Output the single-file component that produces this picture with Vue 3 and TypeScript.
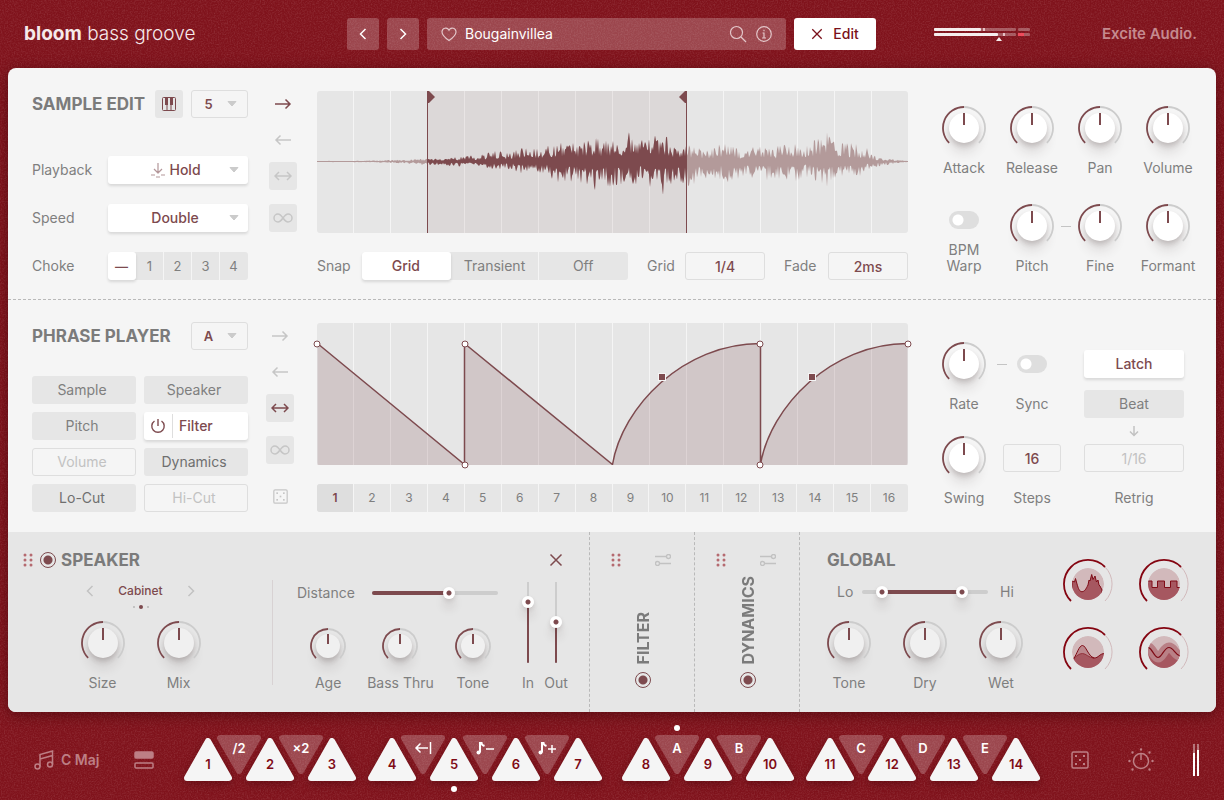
<script setup lang="ts">
import { computed, h, ref, type FunctionalComponent } from 'vue'

interface KnobProps { label: string; small?: boolean }

const Knob: FunctionalComponent<KnobProps> = (props) => {
  const size = props.small ? 36 : 44
  const c = size / 2
  const r = c - 1
  const cap = props.small ? 12 : 15
  const k = r * Math.SQRT1_2
  return h('label', { class: ['knob', props.small ? 'knob-small' : ''] }, [
    h('span', { class: 'knob-dial' }, [
      h('span', { class: 'knob-cap' }),
      h('svg', { width: size, height: size, viewBox: `0 0 ${size} ${size}` }, [
        h('path', { class: 'knob-rest', d: `M${c} ${c - r}A${r} ${r} 0 0 1 ${c + k} ${c + k}` }),
        h('path', { class: 'knob-arc', d: `M${c - k} ${c + k}A${r} ${r} 0 0 1 ${c} ${c - r}` }),
        h('path', { class: 'knob-mark', d: `M${c} ${c - cap}v${props.small ? 10 : 12}` }),
      ]),
      h('input', { type: 'range', min: 0, max: 100, value: 50 }),
    ]),
    h('span', { class: 'knob-label' }, props.label),
  ])
}
Knob.props = { label: String, small: Boolean }

const icons: Record<string, { w: number; h: number; d: string }> = {
  right: { w: 18, h: 12, d: 'M1 6h15M11.500 1.500 16 6l-4.500 4.500' },
  left: { w: 18, h: 12, d: 'M17 6H2M6.500 1.500 2 6l4.500 4.500' },
  both: { w: 18, h: 12, d: 'M1 6h16M5 2 1 6l4 4M13 2l4 4-4 4' },
  loop: { w: 20, h: 12, d: 'M10 6C8 3.200 7 2 5 2a4 4 0 0 0 0 8c2 0 3-1.200 5-4s3-4 5-4a4 4 0 0 1 0 8c-2 0-3-1.200-5-4' },
  prev: { w: 8, h: 12, d: 'M6.500 1 1.500 6l5 5' },
  next: { w: 8, h: 12, d: 'M1.500 1l5 5-5 5' },
  down: { w: 10, h: 12, d: 'M5 1v9.500M1 6.500l4 4 4-4' },
  close: { w: 14, h: 14, d: 'M1.500 1.500l11 11M12.500 1.500l-11 11' },
}
const Icon: FunctionalComponent<{ name: string }> = (props) => {
  const i = icons[props.name]
  return h('svg', { class: 'icon', width: i.w, height: i.h, viewBox: `0 0 ${i.w} ${i.h}`, 'aria-hidden': 'true' }, [h('path', { d: i.d })])
}
Icon.props = { name: String }

const Dice: FunctionalComponent<{ size: number }> = (props) =>
  h('svg', { class: 'icon', width: props.size, height: props.size, viewBox: '0 0 18 18', 'aria-hidden': 'true' }, [
    h('rect', { x: 1, y: 1, width: 16, height: 16, rx: 1.5 }),
    ...[[5, 5], [13, 5], [9, 9], [5, 13], [13, 13]].map(([x, y]) => h('rect', { class: 'pip', x: x - 1, y: y - 1, width: 2, height: 2 })),
  ])
Dice.props = { size: Number }

const preset = ref('Bougainvillea')
const choke = ref('—')
const snap = ref('Grid')
const step = ref(1)

const modules = [
  { name: 'Sample', state: '' }, { name: 'Speaker', state: '' },
  { name: 'Pitch', state: '' }, { name: 'Filter', state: 'active' },
  { name: 'Volume', state: 'off' }, { name: 'Dynamics', state: 'used' },
  { name: 'Lo-Cut', state: 'used' }, { name: 'Hi-Cut', state: 'off' },
]

const W = 591
const upper = [[0, 0.6], [40, 0.8], [80, 1.8], [110, 3], [145, 5], [165, 9], [200, 13], [225, 17], [245, 24], [265, 22], [290, 26], [310, 29], [330, 28], [352, 28], [362, 17], [390, 16], [410, 18], [440, 14], [465, 19], [490, 23], [512, 29], [525, 24], [540, 17], [550, 16], [557, 8], [567, 4], [580, 2], [591, 0.8]]
const lower = [[0, 0.6], [40, 0.8], [80, 1.8], [110, 4], [145, 5], [165, 6], [200, 11], [225, 15], [245, 21], [265, 27], [290, 30], [310, 27], [330, 26], [348, 34], [357, 24], [370, 24], [385, 20], [430, 21], [470, 20], [490, 19], [512, 25], [530, 17], [548, 14], [557, 7], [567, 4], [580, 2], [591, 0.8]]

function envelope(table: number[][], x: number): number {
  for (let i = 1; i < table.length; i++) {
    const [x1, y1] = table[i]
    const [x0, y0] = table[i - 1]
    if (x <= x1) return y0 + ((y1 - y0) * (x - x0)) / (x1 - x0)
  }
  return 0.6
}

const wave = computed(() => {
  let seed = 20731
  const rnd = () => {
    seed = (seed * 1103515245 + 12345) % 2147483648
    return seed / 2147483648
  }
  const top: string[] = []
  const bottom: string[] = []
  for (let x = 0; x <= W; x += 1) {
    const swell = 0.95 + 0.1 * Math.sin(x / 5.3)
    const a = envelope(upper, x) * swell * (0.2 + 0.8 * Math.pow(rnd(), 1.3))
    const b = envelope(lower, x) * swell * (0.2 + 0.8 * Math.pow(rnd(), 1.3))
    top.push(`${x} ${(70.5 - Math.max(a, 0.5)).toFixed(1)}`)
    bottom.push(`${x} ${(70.5 + Math.max(b, 0.5)).toFixed(1)}`)
  }
  return `M${top.join('L')}L${bottom.reverse().join('L')}Z`
})

const selection = { start: 110, end: 370 }
const selectionStyle = {
  left: `${(selection.start / W) * 100}%`,
  width: `${((selection.end - selection.start) / W) * 100}%`,
}

const curve = 'M.5 20.500L147.500 141.500V20.500L295.500 141.500C305 84 366 20.500 443.500 20.500V141.500C453 84 514 20.500 590.500 20.500'
const handles = [[0.5, 20.5], [147.5, 20.5], [147.5, 141.5], [443.5, 20.5], [443.5, 141.5], [590.5, 20.5]]
const benders = [[345, 53.5], [495, 53.5]]
const place = ([x, y]: number[]) => ({ left: `${(x / W) * 100}%`, top: `${(y / 142) * 100}%` })

interface Pad { up: boolean; text: string; mark?: boolean; glyph?: string }
const up = (text: string, mark = false): Pad => ({ up: true, text, mark })
const dn = (text: string, mark = false, glyph = ''): Pad => ({ up: false, text, mark, glyph })
const pads: Pad[][] = [
  [up('1'), dn('/2'), up('2'), dn('×2'), up('3')],
  [up('4'), dn('', false, 'back'), up('5', true), dn('', false, 'minus'), up('6'), dn('', false, 'plus'), up('7')],
  [up('8'), dn('A', true), up('9'), dn('B'), up('10')],
  [up('11'), dn('C'), up('12'), dn('D'), up('13'), dn('E'), up('14')],
]

const macros = [
  { name: 'Macro 1', area: 'M-16-3L-13.500-2-12.500-5.500-11 0C-9.500 5-8.500 7.700-6 7.700S-2 5 0 1L1-4 2-3 3.700-9.500 5-4.500 7-8 8.500-2 10-4 11 1 12 2 14 6V17H-16Z' },
  { name: 'Macro 2', area: 'M-17-3H-12V3.500H-6.500V-3H.500V3.500H6.500V-3H13V3.500H17V18H-17Z' },
  { name: 'Macro 3', area: 'M-14 6C-11 4-9 1.500-5.500 1.500S1 6 6 6 11 1.500 17 1.500V18H-17Z', line: 'M-14 6C-11 2-9-6.500-5.500-6.500S0 4 6 6' },
  { name: 'Macro 4', area: 'M-17-5C-12-5-10 5.500-6 5.500S0-4.500 5-4.500 11 4 17 4V18H-17Z', band: 'M-17-5C-12-5-10 5.500-6 5.500S0-4.500 5-4.500 11 4 17 4' },
]
</script>

<template>
  <div class="plugin">
    <svg class="grain" width="100%" height="100%" aria-hidden="true">
      <filter id="grain"><feTurbulence type="fractalNoise" baseFrequency="0.7" numOctaves="2" seed="4" /><feColorMatrix values="0 0 0 0 1  0 0 0 0 .85  0 0 0 0 .85  1.400 0 0 0 -.55" /></filter>
      <rect width="100%" height="100%" filter="url(#grain)" />
    </svg>

    <header class="top">
      <h1><b>bloom</b> bass groove</h1>
      <div class="browser">
        <button class="glass" aria-label="Previous preset"><Icon name="prev" /></button>
        <button class="glass" aria-label="Next preset"><Icon name="next" /></button>
        <label class="search">
          <svg width="16" height="15" viewBox="0 0 16 15"><path d="M8 13.500C4 10.600 1 8 1 4.900A3.700 3.700 0 0 1 8 3.200 3.700 3.700 0 0 1 15 4.900C15 8 12 10.600 8 13.500Z" /></svg>
          <input v-model="preset" type="text" aria-label="Preset">
          <svg width="18" height="18" viewBox="0 0 18 18"><circle cx="7.500" cy="7.500" r="6" /><path d="M12 12l5 5" /></svg>
          <svg width="18" height="18" viewBox="0 0 18 18"><circle cx="9" cy="9" r="7.300" /><path d="M7.500 8H9v5M7 13h4M9 4.800v1.400" /></svg>
        </label>
        <button class="edit"><Icon name="close" />Edit</button>
      </div>
      <div class="brand">
        <svg width="96" height="16" viewBox="0 0 96 16" role="img" aria-label="Output level">
          <g fill="#fff" fill-opacity=".3"><rect width="82" height="3" y="2" rx="1" /><rect x="84" y="2" width="12" height="3" rx="1" /><rect width="82" height="3" y="7" rx="1" /><rect x="84" y="7" width="12" height="3" rx="1" /></g>
          <g fill="#f5eded"><rect y="2" width="47" height="3" rx="1" /><rect y="7" width="64" height="3" rx="1" /><path d="M65 11l3 4h-6z" /></g>
          <path d="M49 2h2v3h-2zM69 7h2v3h-2z" fill="#e5c2c5" /><path d="M84 7h6v3h-6z" fill="#ee4b5c" />
        </svg>
        <span>Excite Audio.</span>
      </div>
    </header>

    <main>
      <section class="row sample">
        <div class="left">
          <div class="heading">
            <h2>SAMPLE EDIT</h2>
            <button class="square keys" aria-label="Keyboard">
              <svg width="14" height="14" viewBox="0 0 14 14"><rect x=".5" y=".5" width="13" height="13" rx="1" fill="none" stroke="currentColor" /><path d="M5 8v5.500M9 8v5.500" stroke="currentColor" /><path d="M3 0h3v8H3zM8 0h3v8H8z" fill="currentColor" /></svg>
            </button>
            <span class="pick slim"><select aria-label="Sample slot"><option>5</option></select><svg width="10" height="6" viewBox="0 0 10 6"><path d="M1 .5h8L5 5z" /></svg></span>
          </div>
          <div class="fields">
            <div class="field">
              <label for="playback">Playback</label>
              <span class="pick wide hold">
                <svg class="hold-icon" width="14" height="15" viewBox="0 0 14 15"><path d="M7 0v10M3 6l4 4 4-4M0 12h4M10 12h4M5 14h4" /></svg>
                <select id="playback"><option>Hold</option></select><svg width="10" height="6" viewBox="0 0 10 6"><path d="M1 .5h8L5 5z" /></svg>
              </span>
            </div>
            <div class="field">
              <label for="speed">Speed</label>
              <span class="pick wide"><select id="speed"><option>Double</option></select><svg width="10" height="6" viewBox="0 0 10 6"><path d="M1 .5h8L5 5z" /></svg></span>
            </div>
            <div class="field">
              <span>Choke</span>
              <div class="segments" role="group" aria-label="Choke">
                <button v-for="c in ['—', '1', '2', '3', '4']" :key="c" :class="{ on: choke === c }" :aria-pressed="choke === c" @click="choke = c">{{ c }}</button>
              </div>
            </div>
          </div>
        </div>

        <div class="direction">
          <button class="square bare on" aria-label="Forward"><Icon name="right" /></button>
          <button class="square bare" aria-label="Backward"><Icon name="left" /></button>
          <button class="square" aria-label="Ping-pong"><Icon name="both" /></button>
          <button class="square last" aria-label="Loop"><Icon name="loop" /></button>
        </div>

        <div class="center">
          <div class="graph">
            <div class="cells"><i v-for="n in 16" :key="n" /></div>
            <div class="selection" :style="selectionStyle" />
            <svg class="plot" viewBox="0 0 591 142" preserveAspectRatio="none" role="img" aria-label="Waveform">
              <clipPath id="picked"><rect x="110" y="0" width="260" height="142" /></clipPath>
              <path :d="wave" fill="#b39a9a" />
              <path :d="wave" fill="#7d4a4e" clip-path="url(#picked)" />
            </svg>
            <div class="selection edges" :style="selectionStyle">
              <svg width="7" height="12" viewBox="0 0 7 12"><path d="M0 0h1l6 6-6 6H0z" /></svg>
              <svg width="7" height="12" viewBox="0 0 7 12"><path d="M7 0H6L0 6l6 6h1z" /></svg>
            </div>
          </div>
          <div class="snapbar">
            <span class="w-snap">Snap</span>
            <div class="segments grow" role="group" aria-label="Snap">
              <button v-for="s in ['Grid', 'Transient', 'Off']" :key="s" :class="{ on: snap === s }" :aria-pressed="snap === s" @click="snap = s">{{ s }}</button>
            </div>
            <label class="w-grid" for="grid">Grid</label><input id="grid" class="box" type="text" value="1/4">
            <label class="w-fade" for="fade">Fade</label><input id="fade" class="box" type="text" value="2ms">
          </div>
        </div>

        <div class="right knobs">
          <Knob label="Attack" /><Knob label="Release" /><Knob label="Pan" /><Knob label="Volume" />
          <label class="switch warp"><input type="checkbox"><span>BPM<br>Warp</span></label>
          <Knob label="Pitch" class="linked" /><Knob label="Fine" /><Knob label="Formant" />
        </div>
      </section>

      <section class="row phrase">
        <div class="left">
          <div class="heading">
            <h2>PHRASE PLAYER</h2>
            <span class="pick slim"><select aria-label="Phrase"><option>A</option></select><svg width="10" height="6" viewBox="0 0 10 6"><path d="M1 .5h8L5 5z" /></svg></span>
          </div>
          <div class="modules">
            <button v-for="m in modules" :key="m.name" :class="m.state">
              <svg v-if="m.state === 'active'" width="16" height="16" viewBox="0 0 16 16"><path d="M8 1v7M4.500 3a6.200 6.200 0 1 0 7 0" /></svg>
              <span>{{ m.name }}</span>
            </button>
          </div>
        </div>

        <div class="direction">
          <button class="square bare" aria-label="Forward"><Icon name="right" /></button>
          <button class="square bare" aria-label="Backward"><Icon name="left" /></button>
          <button class="square on" aria-label="Ping-pong"><Icon name="both" /></button>
          <button class="square last" aria-label="Loop"><Icon name="loop" /></button>
          <button class="square bare random" aria-label="Randomise"><Dice :size="15" /></button>
        </div>

        <div class="center">
          <div class="graph">
            <div class="cells"><i v-for="n in 16" :key="n" /></div>
            <svg class="plot" viewBox="0 0 591 142" preserveAspectRatio="none" role="img" aria-label="Phrase curve">
              <path :d="curve + 'V142H.5Z'" fill="#7d4a4e" fill-opacity=".2" />
              <path :d="curve" fill="none" stroke="#7d4a4e" stroke-width="1.500" vector-effect="non-scaling-stroke" />
            </svg>
            <i v-for="(p, n) in handles" :key="'h' + n" class="handle" :style="place(p)" />
            <i v-for="(p, n) in benders" :key="'b' + n" class="bender" :style="place(p)" />
          </div>
          <div class="segments steps" role="group" aria-label="Step">
            <button v-for="n in 16" :key="n" :class="{ current: step === n }" @click="step = n">{{ n }}</button>
          </div>
        </div>

        <div class="right timing">
          <Knob label="Rate" class="linked" />
          <label class="switch sync"><input type="checkbox"><span>Sync</span></label>
          <div class="retrig">
            <button class="latch">Latch</button>
            <button>Beat</button>
            <span class="down"><Icon name="down" /></span>
            <input id="retrig" class="box dim" type="text" value="1/16">
            <label for="retrig">Retrig</label>
          </div>
          <Knob label="Swing" />
          <div class="stepcount"><input id="steps" class="box" type="text" value="16"><label for="steps">Steps</label></div>
        </div>
      </section>

      <section class="fx">
        <div class="speaker">
          <div class="fx-head">
            <svg class="grip" width="10" height="14" viewBox="0 0 10 14"><path d="M2 2h0M8 2h0M2 7h0M8 7h0M2 12h0M8 12h0" /></svg>
            <input type="radio" class="power" name="p1" aria-label="Speaker on" checked>
            <h2>SPEAKER</h2>
            <button class="plain" aria-label="Close"><Icon name="close" /></button>
          </div>
          <div class="fx-body">
            <div class="cabinet">
              <div class="cab-pick">
                <button class="plain" aria-label="Previous"><Icon name="prev" /></button>
                <span>Cabinet</span>
                <button class="plain" aria-label="Next"><Icon name="next" /></button>
              </div>
              <div class="dots"><i /><i /><i /></div>
              <div class="pair"><Knob label="Size" /><Knob label="Mix" /></div>
            </div>
            <div class="mic">
              <label class="distance">Distance
                <span class="slider"><i class="fill" :style="{ left: '0%', width: '61%' }" /><i class="thumb" :style="{ left: '61%' }" /><input type="range" value="61"></span>
              </label>
              <div class="trio"><Knob small label="Age" /><Knob small label="Bass Thru" /><Knob small label="Tone" /></div>
            </div>
            <label v-for="s in [{ n: 'In', v: 75 }, { n: 'Out', v: 51 }]" :key="s.n" class="level">
              <span class="vslider"><i class="fill" :style="{ height: s.v + '%' }" /><i class="thumb" :style="{ bottom: s.v + '%' }" /><input type="range" :value="s.v"></span>
              <span>{{ s.n }}</span>
            </label>
          </div>
        </div>

        <div v-for="s in ['FILTER', 'DYNAMICS']" :key="s" class="strip">
          <div class="strip-head">
            <svg class="grip" width="10" height="14" viewBox="0 0 10 14"><path d="M2 2h0M8 2h0M2 7h0M8 7h0M2 12h0M8 12h0" /></svg>
            <svg width="16" height="12" viewBox="0 0 16 12"><circle cx="13.500" cy="2.500" r="2" /><circle cx="2.500" cy="9.500" r="2" /><path d="M0 2.500h11.500M4.500 9.500H16" /></svg>
          </div>
          <h2>{{ s }}</h2>
          <input type="radio" class="power" :name="s" :aria-label="s + ' on'" checked>
        </div>

        <div class="global">
          <div class="global-main">
            <h2>GLOBAL</h2>
            <div class="lohi">
              <span>Lo</span>
              <span class="slider"><i class="fill" :style="{ left: '16%', width: '63%' }" /><i class="thumb" :style="{ left: '16%' }" /><i class="thumb" :style="{ left: '79%' }" /><input type="range" value="16" aria-label="Low and high"></span>
              <span>Hi</span>
            </div>
            <div class="trio"><Knob label="Tone" /><Knob label="Dry" /><Knob label="Wet" /></div>
          </div>
          <div class="macros">
            <label v-for="(m, n) in macros" :key="m.name">
              <svg width="50" height="50" viewBox="-25 -25 50 50">
                <clipPath :id="'disc' + n"><circle r="16" /></clipPath>
                <path d="M17 -17A24 24 0 0 1 17 17" stroke="#d2babc" fill="none" />
                <path d="M-17 17A24 24 0 1 1 17 -17" stroke="#840511" stroke-width="1.800" fill="none" />
                <g :clip-path="`url(#disc${n})`">
                  <circle r="16" fill="#d2b9bb" />
                  <path :d="m.area" fill="#a65760" stroke="#7f0b16" />
                  <path v-if="m.line" :d="m.line" fill="#a65760" fill-opacity=".5" stroke="#7f0b16" />
                  <template v-if="m.band"><path :d="m.band" fill="none" stroke="#b98086" stroke-width="10" /><path :d="m.band" fill="none" stroke="#7f0b16" stroke-width="1.200" /></template>
                </g>
              </svg>
              <input type="range" :aria-label="m.name">
            </label>
          </div>
        </div>
      </section>
    </main>

    <footer>
      <div class="foot-left">
        <button class="key">
          <svg width="21" height="20" viewBox="0 0 21 20"><circle cx="3.500" cy="16.500" r="2.500" /><circle cx="16" cy="14.500" r="2.500" /><path d="M6 16.500V4.500L18.500 1v13.500M6 9l12.500-3.500" /></svg>
          C Maj
        </button>
        <button class="key" aria-label="Layout"><svg width="20" height="18" viewBox="0 0 20 18"><rect x="1" y="1" width="18" height="6" rx="1" fill="currentColor" /><rect x="1" y="12" width="18" height="5" rx="1" /></svg></button>
      </div>
      <div class="pads">
        <div v-for="(g, n) in pads" :key="n" class="pad-group">
          <button v-for="(p, m) in g" :key="m" :class="['pad', p.up ? 'up' : 'dn', { mark: p.mark }]" :aria-label="p.glyph || p.text">
            <svg v-if="p.up" class="tri" width="48" height="43" viewBox="0 0 48 43"><path d="M24 3 45 40H3z" /></svg>
            <svg v-else class="tri" width="44" height="39" viewBox="0 0 44 39"><path d="M3 3h38L22 36z" /></svg>
            <span v-if="p.text">{{ p.text }}</span>
            <svg v-else class="glyph" width="20" height="14" viewBox="0 0 20 14">
              <path v-if="p.glyph === 'back'" d="M15 7H3M7.500 2.500 3 7l4.500 4.500M17.500 1v12" />
              <template v-else>
                <circle cx="3.500" cy="11.500" r="2" fill="#fff" stroke="none" /><path d="M5 11.500V2h1.500q0 2 3 3" stroke-width="2" />
                <path :d="p.glyph === 'plus' ? 'M11 8h8M15 4v8' : 'M11 8h8'" />
              </template>
            </svg>
          </button>
        </div>
      </div>
      <div class="foot-right">
        <button class="key" aria-label="Randomise"><Dice :size="18" /></button>
        <button class="key" aria-label="Settings"><svg width="26" height="24" viewBox="0 0 26 24"><circle cx="13" cy="13" r="7.500" /><path d="M13 6v6" /><path class="rays" d="M13 1.500h0M4.500 4.500h0M21.500 4.500h0M1.500 13h0M24.500 13h0M4.500 21.500h0M21.500 21.500h0" /></svg></button>
        <svg width="8" height="32" viewBox="0 0 8 32" role="img" aria-label="Meter"><path d="M1 0h2v32H1zM5 0h2v32H5z" fill="#fff" fill-opacity=".4" /><path d="M1 9h2v23H1zM5 6h2v26H5z" fill="#fff" /></svg>
      </div>
    </footer>
  </div>
</template>

<style>
body { margin: 0; background: #82141d; }
.icon { display: block; fill: none; stroke: currentColor; stroke-width: 1.5; }
.icon .pip { fill: currentColor; stroke: none; }
.knob { display: flex; flex-direction: column; align-items: center; gap: 9px; position: relative; }
.knob-dial { position: relative; display: block; width: 44px; height: 44px; }
.knob-small .knob-dial { width: 36px; height: 36px; }
.knob-dial svg { position: absolute; inset: 0; fill: none; }
.knob-cap { position: absolute; inset: 7px; border-radius: 50%; background: var(--cap, #fff); box-shadow: 0 3px 5px rgba(60, 40, 40, .2), 0 10px 12px rgba(60, 40, 40, .12); }
.knob-small .knob-cap { inset: 6px; }
.knob-rest { stroke: #cccccc; stroke-width: 1.8; }
.knob-arc { stroke: #7d4a4e; stroke-width: 1.8; }
.knob-mark { stroke: #7d4a4e; stroke-width: 2; }
.knob-dial input { position: absolute; inset: 0; width: 100%; height: 100%; margin: 0; opacity: 0; }
.knob-label { position: relative; line-height: 18px; white-space: nowrap; }
</style>

<style scoped>
.plugin { --wine: #7d4a4e; --grey: #7f7f7f; position: relative; isolation: isolate; min-height: 100vh; display: flex; flex-direction: column; background: #80131c; color: var(--grey); font: 14px/18px Inter, "Liberation Sans", sans-serif; }
.grain { position: absolute; inset: 0; z-index: -1; opacity: .17; }
button, input, select { font: inherit; color: inherit; border: 0; padding: 0; margin: 0; box-sizing: border-box; min-width: 0; }
button { background: #e6e6e6; border-radius: 3px; cursor: pointer; }
h1, h2 { margin: 0; }
h2 { font-size: 17px; font-weight: 700; line-height: 20px; color: #7b7b7b; white-space: nowrap; }

.top { height: 68px; display: grid; grid-template-columns: 1fr minmax(0, 529px) 1fr; align-items: center; padding-right: 1px; color: #fff; }
h1 { padding-left: 24px; font-size: 19px; font-weight: 300; line-height: 24px; white-space: nowrap; color: #f6eaeb; }
h1 b { font-weight: 700; }
.browser { display: flex; gap: 8px; }
.browser button { flex: none; height: 32px; display: flex; align-items: center; justify-content: center; }
.browser .glass { width: 32px; background: rgba(255, 255, 255, .22); color: #fff; }
.search { flex: 1; min-width: 0; height: 32px; padding: 0 13px 0 14px; box-sizing: border-box; display: flex; align-items: center; gap: 8px; border-radius: 3px; background: rgba(255, 255, 255, .22); }
.search svg { flex: none; fill: none; stroke: #e3c6c9; stroke-width: 1.2; }
.search input { flex: 1; background: none; color: #fff; outline: none; }
.browser .edit { width: 82px; gap: 10px; background: #fff; color: #7a101a; font-weight: 500; }
.edit .icon { width: 12px; height: 12px; }
.brand { display: flex; align-items: center; justify-content: space-between; padding: 0 26px 0 58px; color: #c58a8f; font-weight: 600; font-size: 15px; white-space: nowrap; }

main { margin: 0 8px; border-radius: 8px; background: #f5f5f5; box-shadow: 0 3px 14px rgba(50, 0, 5, .5); }
.row { display: grid; grid-template-columns: 216px 69px minmax(0, 1fr) 294px; padding: 22px 14px 20px 24px; }
.sample { padding-bottom: 19px; border-bottom: 1px dashed #b9b9b9; }
.heading { display: flex; align-items: center; gap: 8px; height: 28px; }
.heading h2 { flex: 1; min-width: 0; }
.square { display: flex; flex: none; align-items: center; justify-content: center; width: 28px; height: 28px; color: #c6c6c6; }
.square.bare { background: none; }
.square.on, .keys { color: var(--wine); }
.pick { position: relative; display: block; flex: none; height: 28px; }
.pick select { appearance: none; width: 100%; height: 100%; border-radius: 3px; text-align: center; text-align-last: center; color: var(--wine); }
.pick > svg { position: absolute; right: 9px; top: 11px; pointer-events: none; fill: #cbcbcb; stroke: #cbcbcb; stroke-linejoin: round; }
.slim { width: 57px; }
.slim select { border: 1px solid #dedede; background: transparent; padding-right: 22px; font-size: 13px; font-weight: 600; }
.slim > svg { right: 11px; }
.wide { width: 140px; }
.wide select { background: #fff; padding-right: 6px; box-shadow: 0 2px 3px rgba(0, 0, 0, .12); font-weight: 500; }
.hold select { padding-left: 20px; }
.pick > .hold-icon { left: 43px; right: auto; top: 7px; fill: none; stroke: #b4979a; stroke-width: 1.2; }
.fields { display: grid; gap: 20px; margin-top: 38px; }
.field { display: flex; align-items: center; justify-content: space-between; }
.segments { display: flex; height: 28px; border-radius: 3px; background: #e6e6e6; }
.segments button { flex: 1; background: none; border-right: 1px solid #f5f5f5; border-radius: 0; }
.segments button:last-child { border-right-color: transparent; }
.segments .on { background: #fff; color: var(--wine); border-color: transparent; border-radius: 3px; box-shadow: 0 2px 3px rgba(0, 0, 0, .12); font-weight: 500; }
.field .segments { width: 140px; font-size: 13px; }

.direction { padding-left: 21px; display: flex; flex-direction: column; gap: 8px; }
.phrase .direction { padding-left: 18px; }
.last { margin-top: 6px; }
.random { margin-top: 10px; }

.center { padding-top: 1px; }
.graph { position: relative; height: 142px; }
.cells { position: absolute; inset: 0; display: flex; border-radius: 3px; overflow: hidden; background: #e6e6e6; }
.cells i { flex: 1; border-right: 1px solid #f5f5f5; }
.cells i:last-child { border: 0; }
.plot { position: absolute; inset: 0; width: 100%; height: 100%; }
.selection { position: absolute; top: 0; bottom: 0; background: rgba(125, 74, 78, .09); }
.edges { background: none; border: solid var(--wine); border-width: 0 1px; box-sizing: border-box; display: flex; justify-content: space-between; fill: var(--wine); }
.handle { position: absolute; width: 5px; height: 5px; border: 1px solid var(--wine); border-radius: 50%; background: #fff; transform: translate(-50%, -50%); }
.bender { position: absolute; width: 6px; height: 6px; border: 1px solid #f5f5f5; background: var(--wine); transform: translate(-50%, -50%); }
.snapbar { display: flex; align-items: center; margin-top: 19px; }
.w-snap { width: 45px; }
.w-grid { width: 38px; margin-left: 19px; }
.w-fade { width: 44px; margin-left: 19px; }
.grow { flex: 1; }
.box { width: 80px; height: 28px; border: 1px solid #dedede; border-radius: 3px; background: transparent; text-align: center; color: var(--wine); font-weight: 500; }
.box.dim { color: #c2c2c2; font-weight: 400; }
.steps { margin-top: 19px; overflow: hidden; font-size: 12px; }
.steps .current { background: #dedede; color: var(--wine); font-weight: 600; }

.right { padding-left: 22px; }
.knobs { display: grid; grid-template-columns: repeat(4, 68px); row-gap: 27px; padding-top: 16px; align-content: start; }
.linked::after { content: ""; position: absolute; left: 63px; top: 22px; width: 10px; height: 1px; background: #c4c4c4; }
.timing .linked::after { left: 67px; }
.switch { display: flex; flex-direction: column; align-items: center; text-align: center; }
.switch input { appearance: none; width: 30px; height: 18px; border-radius: 9px; background: radial-gradient(circle at 9px 9px, #fff 5px, transparent 6px) #dedede; }
.warp { padding-top: 7px; gap: 13px; line-height: 16px; }
.sync { padding-top: 13px; gap: 22px; }
.timing { display: grid; grid-template-columns: 68px 68px 136px; row-gap: 23px; padding-top: 20px; align-content: start; }
.retrig { grid-column: 3; grid-row: 1 / 3; display: flex; flex-direction: column; align-items: center; padding-top: 8px; }
.retrig button, .retrig .box { width: 100px; height: 28px; }
.retrig .latch { margin-bottom: 12px; background: #fff; color: var(--wine); font-weight: 500; box-shadow: 0 2px 3px rgba(0, 0, 0, .12); }
.down { height: 26px; display: flex; align-items: center; color: #c2c2c2; }
.retrig label { margin-top: 17px; }
.stepcount { display: flex; flex-direction: column; align-items: center; gap: 17px; padding-top: 8px; }
.stepcount .box { width: 58px; }

.modules { display: grid; grid-template-columns: 1fr 1fr; gap: 8px; margin-top: 26px; }
.modules button { height: 28px; padding-right: 4px; }
.modules .used { color: #6f6f6f; }
.modules .off { background: none; border: 1px solid #dedede; color: #c2c2c2; }
.modules .active { display: flex; align-items: center; padding-left: 6px; gap: 6px; background: #fff; color: var(--wine); font-weight: 500; box-shadow: 0 2px 3px rgba(0, 0, 0, .12); }
.active svg { fill: none; stroke: currentColor; stroke-width: 1.4; }
.active span { border-left: 1px solid #dedede; padding-left: 6px; line-height: 24px; }

.fx { --cap: #f0f0f0; display: flex; background: #e6e6e6; border-radius: 0 0 8px 8px; }
.speaker { flex: 1; padding: 18px 0 20px; border-right: 1px dashed #b9b9b9; }
.fx-head { display: flex; align-items: center; height: 20px; padding: 0 26px 0 15px; }
.fx-head h2 { flex: 1; margin-left: 5px; }
.grip { fill: none; stroke: #b56a70; stroke-width: 3; stroke-linecap: round; }
.plain { background: none; color: var(--wine); }
.power { appearance: none; width: 16px; height: 16px; border: 1px solid var(--wine); border-radius: 50%; background: radial-gradient(circle, var(--wine) 4px, transparent 5px); }
.fx-head .power { margin-left: 7px; }
.fx-body { display: flex; height: 112px; margin-top: 10px; padding-right: 19px; }
.cabinet { width: 265px; display: flex; flex-direction: column; align-items: center; background: linear-gradient(#d8d2d3, #d8d2d3) right top / 1px 105px no-repeat; }
.cab-pick { display: flex; align-items: center; justify-content: space-between; width: 110px; height: 22px; font-size: 12px; color: var(--wine); font-weight: 500; }
.cab-pick .plain { color: #c2c2c2; }
.dots { display: flex; align-items: center; gap: 4px; height: 10px; }
.dots i { width: 2px; height: 2px; background: #c2c2c2; }
.dots i:nth-child(2) { width: 4px; height: 4px; border-radius: 50%; background: var(--wine); }
.pair { display: grid; grid-template-columns: 76px 76px; margin-top: auto; }
.mic { flex: 1; margin: 0 5px 0 19px; display: flex; flex-direction: column; justify-content: space-between; }
.distance { display: flex; align-items: center; justify-content: space-between; height: 26px; padding: 0 11px 0 5px; }
.mic .trio { display: grid; grid-template-columns: repeat(3, 1fr); }
.mic .knob { gap: 10px; }
.slider { position: relative; width: 126px; height: 4px; border-radius: 2px; background: #cdcdcd; }
.fill { position: absolute; background: var(--wine); border-radius: 2px; }
.slider .fill { top: 0; bottom: 0; }
.thumb { position: absolute; width: 12px; height: 12px; border-radius: 50%; background: radial-gradient(circle, var(--wine) 2px, #fff 3px); box-shadow: 0 2px 4px rgba(60, 40, 40, .15), 0 10px 10px rgba(60, 40, 40, .1); }
.slider .thumb { top: 50%; transform: translate(-50%, -50%); }
.slider input, .vslider input, .macros input { position: absolute; inset: 0; width: 100%; height: 100%; opacity: 0; }
.level { width: 28px; display: flex; flex-direction: column; align-items: center; justify-content: space-between; }
.vslider { position: relative; width: 2px; height: 81px; margin-top: 2px; background: #cdcdcd; }
.vslider .fill { left: 0; bottom: 0; width: 2px; }
.vslider .thumb { left: 50%; transform: translate(-50%, 50%); }
.strip { width: 102px; padding: 21px 0 24px 2px; display: flex; flex-direction: column; align-items: center; border-right: 1px dashed #b9b9b9; }
.strip-head { width: 60px; margin-right: 4px; display: flex; justify-content: space-between; align-items: center; fill: none; stroke: #c2c2c2; }
.strip-head svg:last-child { stroke-width: 1.4; }
.strip h2 { writing-mode: vertical-rl; transform: rotate(180deg); margin-top: auto; margin-bottom: 8px; font-size: 16px; }
.global { display: flex; padding: 18px 14px 20px 11px; gap: 11px; }
.global-main { width: 228px; display: flex; flex-direction: column; }
.global-main h2 { padding-left: 16px; }
.lohi { display: flex; align-items: center; height: 24px; margin-top: 10px; padding-left: 26px; }
.lohi > span:first-child { width: 25px; }
.lohi > span:last-child { margin-left: 12px; }
.global-main .trio { display: grid; grid-template-columns: repeat(3, 76px); margin-top: auto; }
.macros { display: grid; grid-template-columns: 76px 76px; grid-auto-rows: 68px; }
.macros label { position: relative; display: grid; place-items: center; }

footer { flex: 1; display: grid; grid-template-columns: 1fr auto 1fr; align-items: start; padding: 23px 0 19px; color: #bd7f85; }
.foot-left, .foot-right { display: flex; align-items: center; height: 42px; margin-top: 4px; }
.foot-left { padding-left: 34px; gap: 35px; }
.foot-right { justify-content: space-between; padding: 0 24px 0 31px; }
.key { display: flex; align-items: center; gap: 6px; background: none; white-space: nowrap; font-weight: 600; }
.key svg { fill: none; stroke: currentColor; stroke-width: 1.5; }
.rays { stroke-width: 2.4; stroke-linecap: round; }
.pads { display: flex; gap: 12px; }
.pad-group { display: flex; align-items: start; }
.pad-group:nth-child(3) { margin-left: 8px; }
.pad { position: relative; background: none; display: flex; justify-content: center; align-items: center; font-weight: 600; font-size: 13px; }
.tri { position: absolute; inset: 0; z-index: -1; stroke-linejoin: round; stroke-width: 6; }
.up { width: 48px; height: 43px; margin-top: 3px; padding-top: 8px; color: #7f0b16; }
.up .tri { fill: #f5f5f5; stroke: #f5f5f5; filter: drop-shadow(0 3px 4px rgba(60, 0, 5, .4)); }
.dn { width: 44px; height: 39px; margin: 0 -15px; padding-bottom: 14px; color: #fff; }
.dn .tri { fill: #fff; stroke: #fff; opacity: .22; }
.glyph { fill: none; stroke: #fff; stroke-width: 1.5; }
.mark::after { content: ""; position: absolute; left: 50%; width: 6px; height: 6px; border-radius: 50%; background: #fff; transform: translateX(-50%); }
.up.mark::after { bottom: -11px; }
.dn.mark::after { top: -10px; }
</style>
